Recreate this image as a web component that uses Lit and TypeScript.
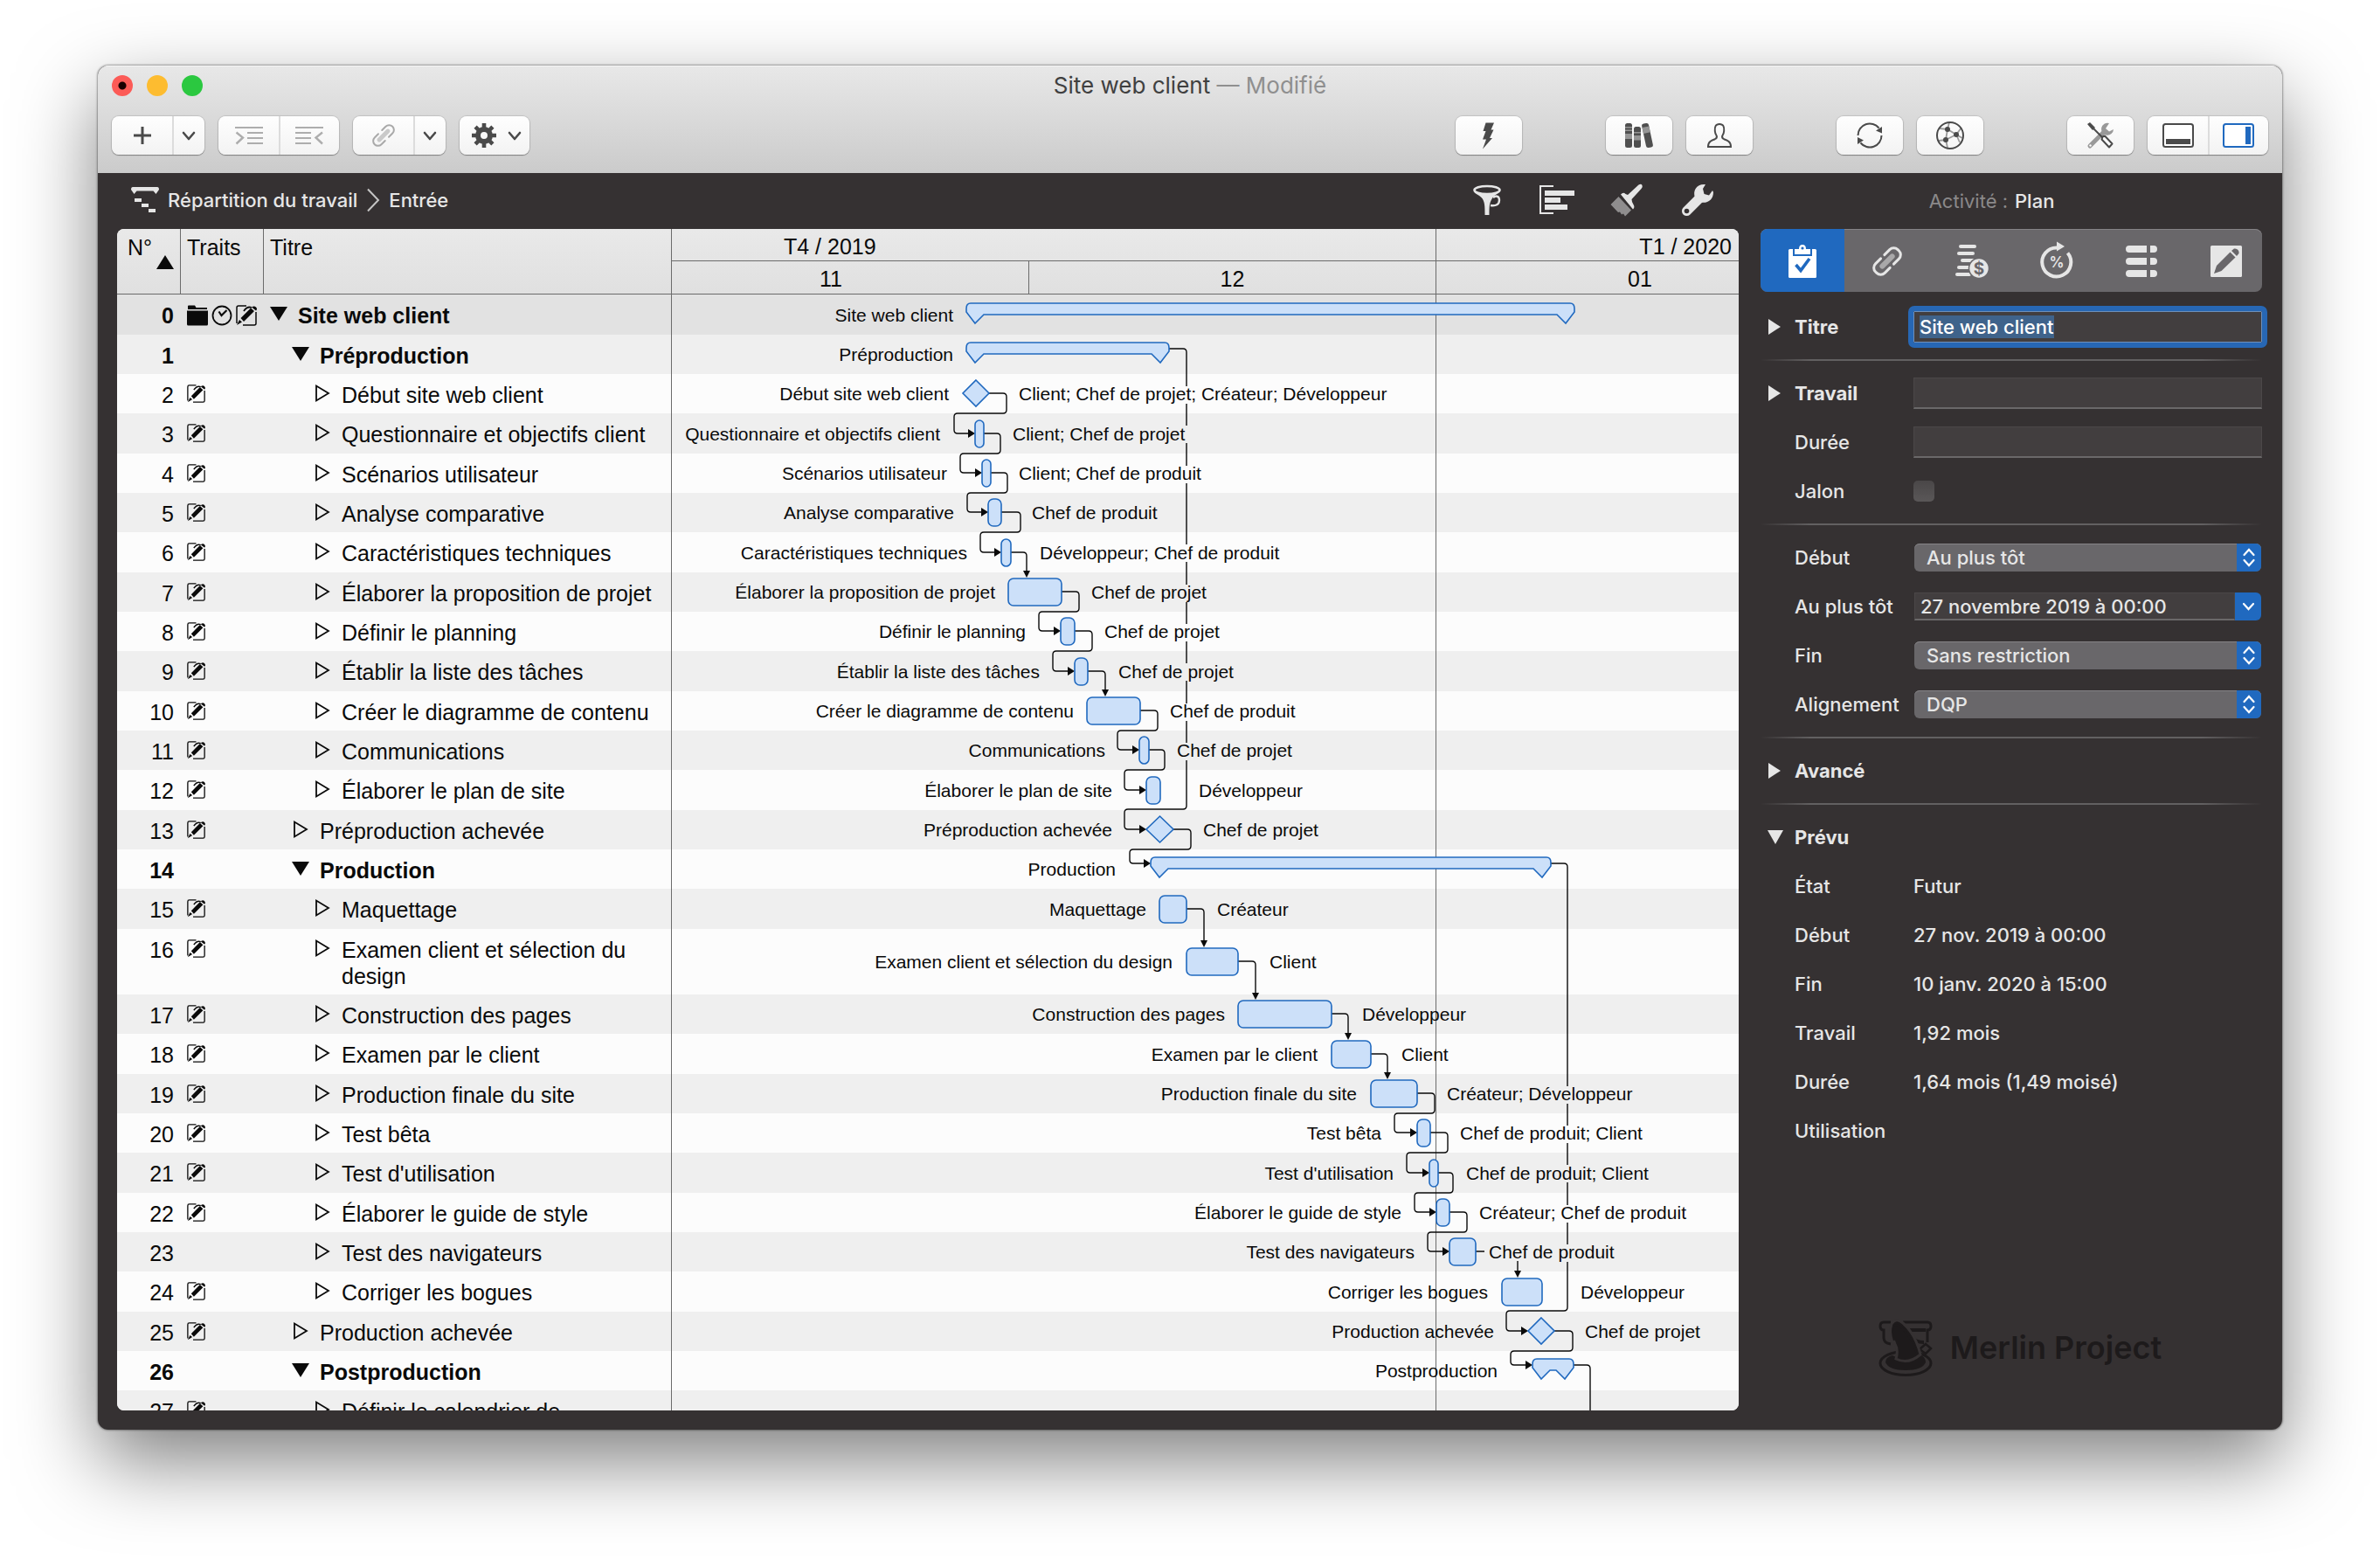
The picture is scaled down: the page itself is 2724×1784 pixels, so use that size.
import { LitElement, html, svg, css, nothing } from "lit";
import { customElement, query } from "lit/decorators.js";
import { classMap } from "lit/directives/class-map.js";
import { styleMap } from "lit/directives/style-map.js";

/* ---------- data ---------- */

type Kind = "group" | "bar" | "milestone";

interface Task {
  id: number;
  title: string;
  level: number;
  kind: Kind;
  /** Horizontal extent on the time scale, in chart units. */
  from: number;
  to: number;
  who?: string;
  note: boolean;
  lines?: number;
}

const task = (
  id: number,
  level: number,
  kind: Kind,
  title: string,
  from: number,
  to: number,
  who = "",
  note = true,
  lines = 1
): Task => ({ id, level, kind, title, from, to, who, note, lines });

const TASKS: Task[] = [
  task(0, 0, "group", "Site web client", 338, 1034),
  task(1, 1, "group", "Préproduction", 338, 570, "", false),
  task(2, 2, "milestone", "Début site web client", 334, 364, "Client; Chef de projet; Créateur; Développeur"),
  task(3, 2, "bar", "Questionnaire et objectifs client", 348, 358, "Client; Chef de projet"),
  task(4, 2, "bar", "Scénarios utilisateur", 356, 366, "Client; Chef de produit"),
  task(5, 2, "bar", "Analyse comparative", 363, 378, "Chef de produit"),
  task(6, 2, "bar", "Caractéristiques techniques", 378, 389, "Développeur; Chef de produit"),
  task(7, 2, "bar", "Élaborer la proposition de projet", 386, 447, "Chef de projet"),
  task(8, 2, "bar", "Définir le planning", 446, 462, "Chef de projet"),
  task(9, 2, "bar", "Établir la liste des tâches", 462, 477, "Chef de projet"),
  task(10, 2, "bar", "Créer le diagramme de contenu", 476, 537, "Chef de produit"),
  task(11, 2, "bar", "Communications", 536, 547, "Chef de projet"),
  task(12, 2, "bar", "Élaborer le plan de site", 544, 560, "Développeur"),
  task(13, 1, "milestone", "Préproduction achevée", 544, 575, "Chef de projet"),
  task(14, 1, "group", "Production", 549, 1007, "", false),
  task(15, 2, "bar", "Maquettage", 559, 590, "Créateur"),
  task(16, 2, "bar", "Examen client et sélection du design", 590, 649, "Client", true, 2),
  task(17, 2, "bar", "Construction des pages", 649, 756, "Développeur"),
  task(18, 2, "bar", "Examen par le client", 756, 801, "Client"),
  task(19, 2, "bar", "Production finale du site", 801, 854, "Créateur; Développeur"),
  task(20, 2, "bar", "Test bêta", 854, 869, "Chef de produit; Client"),
  task(21, 2, "bar", "Test d'utilisation", 868, 878, "Chef de produit; Client"),
  task(22, 2, "bar", "Élaborer le guide de style", 876, 891, "Créateur; Chef de produit"),
  task(23, 2, "bar", "Test des navigateurs", 891, 921, "Chef de produit", false),
  task(24, 2, "bar", "Corriger les bogues", 951, 997, "Développeur"),
  task(25, 1, "milestone", "Production achevée", 981, 1011, "Chef de projet"),
  task(26, 1, "group", "Postproduction", 986, 1033, "", false),
  task(27, 2, "bar", "Définir le calendrier de", 1100, 1110),
];

/** Where each row's left and right captions stand on the time scale. */
const CAPTIONS: Record<number, [number, number]> = {
  0: [323, 0], 1: [323, 0], 2: [318, 398], 3: [308, 391], 4: [316, 398],
  5: [324, 413], 6: [339, 422], 7: [371, 481], 8: [406, 496], 9: [422, 512],
  10: [461, 571], 11: [497, 579], 12: [505, 604], 13: [505, 609], 14: [509, 0],
  15: [544, 625], 16: [574, 685], 17: [634, 791], 18: [740, 836], 19: [785, 888],
  20: [813, 903], 21: [827, 910], 22: [836, 925], 23: [851, 936], 24: [935, 1041],
  25: [942, 1046], 26: [946, 0],
};

/** Links that turn back: source row, turning x, entry x. */
const BACK_LINKS: [number, number, number][] = [
  [2, 384, 324], [3, 377, 331], [4, 385, 339], [5, 400, 354], [7, 467, 421],
  [8, 482, 437], [10, 557, 511], [11, 565, 519], [13, 595, 525], [19, 874, 828],
  [20, 889, 842], [21, 895, 851], [22, 911, 866], [25, 1032, 961],
];

/** Links that drop straight onto the next bar: source row, x. */
const DROP_LINKS: [number, number][] = [
  [6, 407], [9, 497], [15, 610], [16, 669], [17, 775], [18, 820],
];

const rowHeight = (t: Task): number => (t.lines === 2 ? 75 : t.id % 3 === 0 ? 46 : 45);

const ROW_TOPS: number[] = [];
TASKS.reduce((y, t) => {
  ROW_TOPS.push(y);
  return y + rowHeight(t);
}, 0);

const centre = (id: number): number => {
  const h = rowHeight(TASKS[id]);
  return ROW_TOPS[id] + (h === 75 ? 37 : h - 23);
};
const linkY = (id: number): number => centre(id) - (TASKS[id].kind === "group" ? 6 : 0);

/* ---------- icons ---------- */

const ic = (body: unknown, size = 40) =>
  html`<svg width=${size} height=${size} viewBox="0 0 40 40" aria-hidden="true">${body}</svg>`;

const I = {
  plus: ic(svg`<path d="M20 10v20M10 20h20" stroke="#4a4a4a" stroke-width="3" fill="none"/>`),
  down: html`<svg width="18" height="18" viewBox="0 0 18 18" aria-hidden="true"><path d="M3 6l6 7 6-7" stroke="#4a4a4a" stroke-width="2.6" fill="none" stroke-linecap="round" stroke-linejoin="round"/></svg>`,
  indent: ic(svg`<g stroke="#adadad" stroke-width="2" fill="none"><path d="M4 11h32M18 17h18M18 23h18M18 29h18"/><path d="M5.5 16.500l7.500 6-7.500 7" stroke-width="2.4"/></g>`),
  outdent: ic(svg`<g stroke="#adadad" stroke-width="2" fill="none"><path d="M4 11h32M4 17h18M4 23h18M4 29h18"/><path d="M35 16.500l-7.500 6 7.500 7" stroke-width="2.4"/></g>`),
  link: ic(svg`<g transform="rotate(45 20 20)" fill="none" stroke-linecap="round"><path d="M20 13v14" stroke="#c9c9c9" stroke-width="5"/><path d="M14.500 17v-6a5.500 5.500 0 0 1 11 0v6M14.500 23v6a5.500 5.500 0 0 0 11 0v-6" stroke="#a9a9a9" stroke-width="2"/></g>`),
  gear: ic(svg`<g stroke="#4a4a4a" fill="none"><circle cx="20" cy="20" r="7" stroke-width="6"/><g stroke-width="4.6"><path d="M20 6v6M20 28v6M6 20h6M28 20h6M10.100 10.100l4.200 4.200M25.700 25.700l4.200 4.200M29.900 10.100l-4.200 4.200M14.300 25.700l-4.200 4.200"/></g></g>`),
  bolt: ic(svg`<path d="M16.500 5.500H26L22.500 13.500H25.500L21 23H24L13 35.500L17 24.500H13L16.500 15H13.500Z" fill="#4a4a4a"/>`),
  books: ic(svg`<g fill="#4f4f4f"><rect x="4" y="6" width="8" height="28" rx="2.500"/><rect x="14" y="10" width="8" height="24" rx="2.500"/><g transform="rotate(-12 29.500 20)"><rect x="25.500" y="6" width="8" height="28" rx="2.500"/><path d="M25.500 10h8v7h-8z" fill="#959595"/></g></g><path d="M4 10h8v1.500H4zM4 13.500h8V15H4zM4 18h8v6H4zM14 16h8v1.500h-8zM14 20h8v5.500h-8z" fill="#959595"/>`),
  person: ic(svg`<path d="M20 7c-4.500 0-5.600 3-5.200 8 .2 3 1 4 2 5.500.6 2.200-.3 3-2 3.700-4 1.500-8 3-7.800 8.800h26c.2-5.800-3.800-7.300-7.800-8.800-1.700-.7-2.600-1.500-2-3.700 1-1.500 1.800-2.500 2-5.500.4-5-.7-8-5.200-8z" fill="none" stroke="#4a4a4a" stroke-width="2"/>`),
  sync: ic(svg`<path d="M6.500 20a13.500 13.500 0 0 1 24-8.500M33.500 20a13.500 13.500 0 0 1-24 8.500" fill="none" stroke="#4a4a4a" stroke-width="2"/><path d="M34 10v7.500l-7-3zM6 30v-8l7 3.500z" fill="#4a4a4a"/>`),
  globe: ic(svg`<g fill="none" stroke="#9a9a9a" stroke-width="1.800"><path d="M17 13l10 6-12 6zM17 13L8 12M17 13l2-8M27 19l6-8M27 19l7 4M15 25l-8 1M15 25l2 9M27 19l4 9"/></g><circle cx="20" cy="20" r="15" fill="none" stroke="#4a4a4a" stroke-width="2"/><g fill="#4a4a4a"><circle cx="17" cy="13" r="3"/><circle cx="27" cy="19" r="3"/><circle cx="15" cy="25" r="3"/></g>`),
  tools: ic(svg`<path d="M8 32L24 16" stroke="#999" stroke-width="5" stroke-linecap="round"/><path d="M30 6a7 7 0 1 0 5 7l-5 2.500-4-3.500z" fill="#999"/><circle cx="8.500" cy="31.500" r="1.200" fill="#fff"/><path d="M8 8l16 16" stroke="#4a4a4a" stroke-width="2"/><path d="M5 7l3-2 6 6-3 3z" fill="#4a4a4a"/><path d="M22.500 21.500l2.500-1 8.500 9-3.500 4-8.500-9z" fill="#fff" stroke="#4a4a4a" stroke-width="2" stroke-linejoin="round"/>`),
  panelBottom: ic(svg`<rect x="3" y="7" width="34" height="26" rx="2.500" fill="#fff" stroke="#4a4a4a" stroke-width="2"/><path d="M6 24h28v6H6z" fill="#4a4a4a"/>`),
  panelRight: ic(svg`<rect x="3" y="7" width="34" height="26" rx="2.500" fill="#fff" stroke="#2069bf" stroke-width="2"/><path d="M28 10h6v20h-6z" fill="#2069bf"/>`),
  outline: html`<svg width="32" height="30" viewBox="0 0 32 30" aria-hidden="true"><path d="M2 0h28q2 0 2 3l-3.500 5-3-3.500h-19L3.500 8 0 3q0-3 2-3zM4 13h8v4H4zM12 19h8v4h-8zM20 25h8v4h-8z" fill="#e6e6e6"/></svg>`,
  chevron: html`<svg width="16" height="28" viewBox="0 0 16 28" aria-hidden="true"><path d="M2 1.500l12 12.500L2 26.500" stroke="#c4c4c4" stroke-width="2" fill="none"/></svg>`,
  funnel: ic(svg`<ellipse cx="20" cy="8.500" rx="14.500" ry="4.500" fill="none" stroke="#e6e6e6" stroke-width="2.600"/><path d="M4.500 10c2 3 6 4 9 7 4 4 4 10 4 20h5c0-10 0-14 4-20 2-3 6-4 8-7-8 4-22 4-30 0z" fill="#e6e6e6"/><path d="M27 17c4-3 7-1 7 3 0 5-4 7-10 6" fill="none" stroke="#e6e6e6" stroke-width="2.400"/>`),
  gantt: html`<svg width="40" height="36" viewBox="0 0 40 36" aria-hidden="true"><path d="M16 2H1v31h15" fill="none" stroke="#e6e6e6" stroke-width="2"/><path d="M6 7h34v6H6zM6 15h18v6H6zM6 23h26v6H6z" fill="#e6e6e6"/></svg>`,
  brush: ic(svg`<path d="M13 13.500q3-3 5.500-.5l2.500 1L33.500 2.500q3-1.500 4 .5t-1 4L25.500 19q0 3 2 6t-.5 5.500z" fill="#e6e6e6"/><path d="M10.500 16L25 31.500l-7 7-2-3-2 1-2-3-2 .5L1.500 25z" fill="#8f8d8e"/>`),
  wrench: ic(svg`<path d="M8.500 32.500L24 17" stroke="#e6e6e6" stroke-width="11" stroke-linecap="round"/><path d="M30 2c-10-1-15 7-12 15l5 5c8 3 16-2 16-11l-1-2-4 5.500-5.500-1.500-1.500-6z" fill="#e6e6e6"/><circle cx="8.500" cy="32.500" r="2.800" fill="#353132"/>`),
  clipboard: ic(svg`<rect x="4" y="6" width="32" height="33" rx="1.500" fill="#fff"/><path d="M10 5.500V13h20V5.500" fill="none" stroke="#2069bf" stroke-width="2"/><path d="M12 11V6h4q0-5 4-5t4 5h4v5z" fill="#fff"/><circle cx="20" cy="5" r="1.600" fill="#2069bf"/><path d="M12.500 24l5.500 6.500L28 17" fill="none" stroke="#2069bf" stroke-width="3.600"/>`),
  tabLink: ic(svg`<g transform="rotate(45 20 20)" fill="none" stroke-linecap="round"><path d="M20 12v16" stroke="#a9a8a9" stroke-width="6"/><path d="M12.500 17V8.500a6.500 6.500 0 0 1 6.500-6.500h2a6.500 6.500 0 0 1 6.500 6.500V17M12.500 23v8.500a6.500 6.500 0 0 0 6.500 6.500h2a6.500 6.500 0 0 0 6.500-6.500V23" stroke="#e6e6e6" stroke-width="3"/></g>`),
  tabCost: ic(svg`<g fill="#e6e6e6"><rect x="5" y="1" width="20" height="4" rx="2"/><rect x="3" y="9" width="20" height="4" rx="2"/><rect x="7" y="17" width="16" height="4" rx="2"/><rect x="3" y="25" width="16" height="4" rx="2"/><rect x="1" y="33" width="18" height="4" rx="2"/></g><circle cx="28" cy="28" r="11.500" fill="#e6e6e6" stroke="#69676a" stroke-width="1.500"/><text x="28" y="35" text-anchor="middle" font-family="Inter, sans-serif" font-weight="700" font-size="19" fill="#69676a">$</text>`),
  tabPercent: ic(svg`<path d="M20 4.500a16.500 16.500 0 1 0 12.500 6" fill="none" stroke="#e6e6e6" stroke-width="4"/><path d="M20-2.500v11l9-5.500z" fill="#e6e6e6"/><text x="20" y="27" text-anchor="middle" font-family="Inter, sans-serif" font-weight="600" font-size="17" fill="#e6e6e6">%</text>`),
  tabRows: ic(svg`<path d="M6 2h20v8H6a4 4 0 0 1 0-8zM30 2h4a4 4 0 0 1 0 8h-4zM6 16h20v8H6a4 4 0 0 1 0-8zM30 16h4a4 4 0 0 1 0 8h-4zM6 30h20v8H6a4 4 0 0 1 0-8zM30 30h4a4 4 0 0 1 0 8h-4z" fill="#e6e6e6"/>`),
  tabEdit: ic(svg`<rect x="2" y="2" width="36" height="36" rx="1.500" fill="#e6e6e6"/><path d="M6 34l3-9L24.500 9.500l6 6L14.500 31z" fill="#69676a"/><path d="M26 8l3-2.500q3-.5 4.500 1.500t1 4L32 14z" fill="#69676a"/>`),
  updown: html`<svg width="28" height="32" viewBox="0 0 28 32" aria-hidden="true"><path d="M8.500 13l5.500-6 5.500 6M8.500 19l5.500 6 5.500-6" stroke="#fff" stroke-width="2.200" fill="none" stroke-linecap="round"/></svg>`,
  dateDown: html`<svg width="30" height="32" viewBox="0 0 30 32" aria-hidden="true"><path d="M10 13l5.500 6L21 13" stroke="#fff" stroke-width="2.200" fill="none" stroke-linecap="round"/></svg>`,
  folder: html`<svg width="24" height="24" viewBox="0 0 24 24" aria-hidden="true"><path d="M1 1.500Q1 .5 2 .5h7l1.500 2.500H23V5H1zM0 6.500h24V22q0 1.500-1.500 1.500h-21Q0 23.500 0 22z" fill="#0a0a0a"/></svg>`,
  clock: html`<svg width="24" height="24" viewBox="0 0 24 24" aria-hidden="true"><circle cx="12" cy="12" r="10.500" fill="none" stroke="#0a0a0a" stroke-width="1.800"/><path d="M8.500 7.500l3 4.500 6-6" fill="none" stroke="#0a0a0a" stroke-width="2.200"/></svg>`,
  merlin: html`<svg width="62" height="66" viewBox="0 0 62 66" aria-hidden="true">
    <g fill="none" stroke="#1d1a1b" stroke-width="3">
      <path d="M28 4h28q4 0 4 4.500T56 13v14M14 4H6Q2 4 2 8.500T6 13v9q0 6 8 7"/>
      <path d="M34 13h20M38 19v2q4 6 14 6" stroke-width="4"/>
      <path d="M54 29l6 5-6 6-7-5z" stroke-width="2.500"/>
      <ellipse cx="31" cy="51" rx="29" ry="13.500"/>
    </g>
    <path d="M8 50q0-6 8-8 15 9 30-1 8 2 8 9-4 9-23 9T8 50z" fill="#1d1a1b"/>
    <path d="M20 46q3-10-1-17Q12 14 15 6q5-8 13-1 14 12 20 36-14 12-28 5z" fill="#1d1a1b" stroke="#353132" stroke-width="3"/>
    <path d="M18 25q-4-12 0-17 4-3 9 3 12 12 16 27" fill="none" stroke="#1d1a1b" stroke-width="2"/></svg>`,
};

const noteIcon = (size: number) => html`<svg width=${size} height=${size} viewBox="0 0 24 24" aria-hidden="true">
  <path d="M12 1H3Q1 1 1 3v18M23 8v13q0 2-2 2H8" fill="none" stroke="#0a0a0a" stroke-width="1.500"/>
  <path d="M9 7q4-6 9-4" fill="none" stroke="#0a0a0a" stroke-width="1.800"/>
  <path d="M1 23l3-6 3 2.500zM5.500 15L17 3.500l4 3.500L9 19zM18 2.500q3-2 5 0t0 4z" fill="#0a0a0a"/></svg>`;

/* ---------- Gantt chart ---------- */

@customElement("gantt-chart")
export class GanttChart extends LitElement {
  static styles = css`
    :host {
      display: flex;
      flex-direction: column;
      min-width: 0;
      overflow: hidden;
      font-family: "Liberation Sans", Arial, sans-serif;
      color: #0a0a0a;
    }
    .head {
      height: 75px;
      flex: none;
      box-sizing: border-box;
      border-bottom: 1px solid #6b6b6b;
      background: linear-gradient(#e9e9e9, #e0e0e0);
      font-size: 25px;
      overflow: hidden;
    }
    .scale {
      display: flex;
      height: 37px;
      box-sizing: border-box;
      line-height: 40px;
      border-left: 1px solid #6b6b6b;
    }
    .scale.quarters {
      border-bottom: 1px solid #6b6b6b;
    }
    .cell {
      box-sizing: border-box;
      flex: none;
      border-right: 1px solid #6b6b6b;
    }
    .q4 {
      width: 875px;
      padding-left: 128px;
    }
    .q1 {
      flex: 1;
      border-right: 0;
      text-align: right;
      padding-right: 8px;
    }
    .november {
      width: 453px;
      margin-left: -44px;
      text-align: center;
    }
    .december,
    .january {
      width: 466px;
      text-align: center;
    }
    .january {
      border-right: 0;
    }
    .canvas {
      display: block;
      flex: none;
      width: 100%;
    }
    .stripe {
      fill: #fcfcfc;
    }
    .stripe.odd {
      fill: #efefef;
    }
    .stripe.selected {
      fill: #e2e2e2;
    }
    .grid {
      stroke: #6b6b6b;
      stroke-width: 1;
    }
    .dep {
      fill: none;
      stroke: #0a0a0a;
      stroke-width: 1.4;
    }
    .arrow {
      fill: #0a0a0a;
    }
    .shape {
      fill: #cce0f9;
      stroke: #2069bf;
      stroke-width: 1.6;
    }
    .label {
      font-size: 21px;
      fill: #0a0a0a;
    }
    .end {
      text-anchor: end;
    }
  `;

  private shape(t: Task) {
    const c = centre(t.id);
    const { from: a, to: b } = t;
    if (t.kind === "milestone") {
      const m = (a + b) / 2;
      return svg`<path class="shape" d="M${m} ${c - 15}L${b} ${c}L${m} ${c + 15}L${a} ${c}Z"/>`;
    }
    if (t.kind === "group") {
      return svg`<path class="shape" d="M${a + 5} ${c - 13}H${b - 5}Q${b} ${c - 13} ${b} ${c - 7}V${c - 3}L${b - 10} ${c + 10}L${b - 20} ${c}H${a + 20}L${a + 10} ${c + 10}L${a} ${c - 3}V${c - 7}Q${a} ${c - 13} ${a + 5} ${c - 13}Z"/>`;
    }
    const w = b - a;
    return svg`<rect class="shape" x=${a} y=${c - 15} width=${w} height="31" rx=${Math.min(6, w / 2)}/>`;
  }

  /** Turns back below the source row, then enters the next row from the left. */
  private back(x1: number, y1: number, x2: number, mid: number, x3: number, y2: number, x4: number) {
    return svg`<path class="dep" d="M${x1} ${y1}H${x2 - 4}Q${x2} ${y1} ${x2} ${y1 + 4}V${mid - 4}Q${x2} ${mid} ${x2 - 4} ${mid}H${x3 + 4}Q${x3} ${mid} ${x3} ${mid + 4}V${y2 - 4}Q${x3} ${y2} ${x3 + 4} ${y2}H${x4 - 6}"/>
      <path class="arrow" d="M${x4} ${y2}l-8 -5v10z"/>`;
  }

  private drop(id: number, x: number) {
    const y1 = centre(id);
    const y2 = centre(id + 1) - 16;
    return svg`<path class="dep" d="M${TASKS[id].to} ${y1}H${x - 4}Q${x} ${y1} ${x} ${y1 + 4}V${y2 - 6}"/>
      <path class="arrow" d="M${x} ${y2}l-4 -8h8z"/>`;
  }

  /** A long summary link; it pauses behind the captions of the rows it crosses. */
  private long(id: number, x: number, target: number, entry: number, crossed: number[]) {
    const y1 = linkY(id);
    const mid = ROW_TOPS[target] - 1;
    const y2 = centre(target);
    const x4 = TASKS[target].from;
    const gaps = crossed.map((r) => `V${ROW_TOPS[r] + 14}M${x} ${ROW_TOPS[r] + 34}`).join("");
    return svg`<path class="dep" d="M${TASKS[id].to} ${y1}H${x - 4}Q${x} ${y1} ${x} ${y1 + 4}${gaps}V${mid - 4}Q${x} ${mid} ${x - 4} ${mid}H${entry + 4}Q${entry} ${mid} ${entry} ${mid + 4}V${y2 - 4}Q${entry} ${y2} ${entry + 4} ${y2}H${x4 - 6}"/>
      <path class="arrow" d="M${x4} ${y2}l-8 -5v10z"/>`;
  }

  render() {
    const total = ROW_TOPS[27] + rowHeight(TASKS[27]);
    return html`
      <div class="head">
        <div class="scale quarters">
          <div class="cell q4">T4 / 2019</div>
          <div class="cell q1">T1 / 2020</div>
        </div>
        <div class="scale">
          <div class="cell november">11</div>
          <div class="cell december">12</div>
          <div class="cell january">01</div>
        </div>
      </div>
      <svg class="canvas" height=${total}>
        ${TASKS.map(
          (t) => svg`<rect class=${"stripe" + (t.id === 0 ? " selected" : t.id % 2 ? " odd" : "")}
            x="0" y=${ROW_TOPS[t.id]} width="100%" height=${rowHeight(t)}/>`
        )}
        <path class="grid" d="M.5 0V${total}M875.5 0V${total}"/>
        ${BACK_LINKS.map(([id, out, entry]) =>
          this.back(TASKS[id].to, linkY(id), out, ROW_TOPS[id + 1], entry, linkY(id + 1), TASKS[id + 1].from)
        )}
        ${DROP_LINKS.map(([id, x]) => this.drop(id, x))}
        ${this.long(1, 590, 13, 519, [2, 3, 4, 6, 7, 8, 9, 10, 11])}
        ${this.long(14, 1026, 25, 956, [19, 20, 21, 22, 23])}
        <path class="dep" d="M921 ${centre(23)}H931M969 ${ROW_TOPS[24] - 12}V${centre(24) - 22}"/>
        <path class="arrow" d="M969 ${centre(24) - 16}l-4 -8h8z"/>
        <path class="dep" d="M1033 ${linkY(26)}H1048Q1052 ${linkY(26)} 1052 ${linkY(26) + 4}V${total}"/>
        ${TASKS.slice(0, 27).map((t) => this.shape(t))}
        ${TASKS.slice(0, 27).map((t) => {
          const [left, right] = CAPTIONS[t.id];
          const y = centre(t.id) + 8;
          return svg`<text class="label end" x=${left} y=${y}>${t.title}</text>
            ${t.who ? svg`<text class="label" x=${right} y=${y}>${t.who}</text>` : nothing}`;
        })}
      </svg>
    `;
  }
}

/* ---------- inspector ---------- */

@customElement("plan-inspector")
export class PlanInspector extends LitElement {
  static styles = css`
    :host {
      display: flex;
      flex-direction: column;
      box-sizing: border-box;
      padding: 0 23px 0 25px;
      color: #e6e6e6;
      font: 500 22px/28px Inter, "Liberation Sans", sans-serif;
    }
    svg {
      display: block;
      overflow: visible;
    }
    button,
    input,
    select {
      font: inherit;
      color: inherit;
      margin: 0;
      border: 0;
      padding: 0;
      background: none;
      border-radius: 0;
      appearance: none;
      min-width: 0;
    }
    .heading {
      display: grid;
      grid-template-columns: 1fr 1fr;
      gap: 8px;
      height: 64px;
      align-items: center;
      flex: none;
    }
    .kind {
      color: #8b898a;
      text-align: right;
      font-weight: 400;
    }
    .tabs {
      display: flex;
      height: 72px;
      flex: none;
      border-radius: 8px;
      overflow: hidden;
      background: #69676a;
      box-shadow: inset 0 1px 0 #858386;
      margin-bottom: 12px;
    }
    .tab {
      flex: none;
      width: 97px;
      display: flex;
      align-items: center;
      justify-content: center;
      padding-top: 2px;
    }
    .tab.active {
      background: #2069bf;
      width: 96px;
    }
    hr {
      flex: none;
      width: 100%;
      height: 2px;
      margin: 9px 0;
      border: 0;
      background: linear-gradient(90deg, transparent, #626061 10%, #626061 88%, transparent);
    }
    .row {
      display: grid;
      grid-template-columns: 39px 136px 1fr;
      align-items: center;
      height: 56px;
    }
    .twisty {
      display: flex;
      padding-left: 8px;
      justify-self: start;
    }
    .strong {
      font-weight: 700;
    }
    .label {
      grid-column: 2;
      white-space: nowrap;
    }
    .value {
      grid-column: 3;
      white-space: nowrap;
    }
    .field {
      height: 36px;
      box-sizing: border-box;
      background: #423e3f;
      border: 1px solid #4b4748;
      border-bottom: 2px solid #6a6869;
      width: 100%;
      padding: 0 6px;
    }
    .field:focus {
      outline: 6px solid #2767b4;
      outline-offset: 0;
      border: 1px solid #6f8fb8;
      border-radius: 1px;
    }
    .field::selection {
      background: #3f638b;
      color: #fff;
    }
    .tick {
      width: 24px;
      height: 24px;
      border-radius: 5px;
      background: linear-gradient(#4a4748, #5a5758);
    }
    .picker {
      display: grid;
      grid-template-columns: 1fr 28px;
      height: 32px;
      margin: 0 1px;
      border-radius: 6px;
      overflow: hidden;
      background: #69676a;
      box-shadow: inset 0 1px 0 #858386;
    }
    .picker select {
      grid-area: 1 / 1 / 2 / 3;
      padding-left: 14px;
      width: 100%;
    }
    .cap {
      grid-area: 1 / 2;
      background: #2069bf;
      pointer-events: none;
    }
    .date {
      display: grid;
      grid-template-columns: 1fr 30px;
      height: 32px;
      margin: 0 1px;
    }
    .date .field {
      height: 32px;
    }
    .date button {
      background: #2069bf;
      border-radius: 0 6px 6px 0;
    }
    .brand {
      margin-top: auto;
      padding: 0 0 61px 20px;
      display: flex;
      justify-content: center;
      align-items: center;
      gap: 20px;
      color: #1d1a1b;
      font-size: 36px;
      line-height: 40px;
      font-weight: 600;
    }
  `;

  @query("#titre") private titre!: HTMLInputElement;

  firstUpdated() {
    this.titre.focus();
    this.titre.select();
  }

  private twisty(label: string, open = false) {
    return html`<button class="twisty" aria-label=${label} aria-expanded=${open}>
      <svg width="18" height="18" viewBox="0 0 18 18">
        <path d=${open ? "M0 1h18L9 17z" : "M1 0v18l14-9z"} fill="#e6e6e6" />
      </svg>
    </button>`;
  }

  private choice(id: string, label: string, value: string) {
    return html`<div class="row">
      <label class="label" for=${id}>${label}</label>
      <div class="value picker">
        <select id=${id}><option>${value}</option></select>
        <span class="cap">${I.updown}</span>
      </div>
    </div>`;
  }

  render() {
    const tabs: [string, unknown][] = [
      ["Plan", I.clipboard],
      ["Liens", I.tabLink],
      ["Coûts", I.tabCost],
      ["Avancement", I.tabPercent],
      ["Champs", I.tabRows],
      ["Notes", I.tabEdit],
    ];
    const facts = [
      ["État", "Futur"],
      ["Début", "27 nov. 2019 à 00:00"],
      ["Fin", "10 janv. 2020 à 15:00"],
      ["Travail", "1,92 mois"],
      ["Durée", "1,64 mois (1,49 moisé)"],
      ["Utilisation", ""],
    ];
    return html`
      <div class="heading"><span class="kind">Activité :</span><span>Plan</span></div>
      <div class="tabs">
        ${tabs.map(
          ([name, icon], i) =>
            html`<button class=${classMap({ tab: true, active: i === 0 })} aria-label=${name}>${icon}</button>`
        )}
      </div>
      <div class="row">
        ${this.twisty("Détails du titre")}
        <label class="label strong" for="titre">Titre</label>
        <input class="value field" id="titre" type="text" .value=${"Site web client"} />
      </div>
      <hr />
      <div class="row">
        ${this.twisty("Détails du travail")}
        <label class="label strong" for="travail">Travail</label>
        <input class="value field" id="travail" type="text" />
      </div>
      <div class="row">
        <label class="label" for="duree">Durée</label>
        <input class="value field" id="duree" type="text" />
      </div>
      <div class="row">
        <label class="label" for="jalon">Jalon</label>
        <input class="value tick" id="jalon" type="checkbox" />
      </div>
      <hr />
      ${this.choice("debut", "Début", "Au plus tôt")}
      <div class="row">
        <label class="label" for="date">Au plus tôt</label>
        <div class="value date">
          <input class="field" id="date" type="text" .value=${"27 novembre 2019 à 00:00"} />
          <button aria-label="Choisir une date">${I.dateDown}</button>
        </div>
      </div>
      ${this.choice("fin", "Fin", "Sans restriction")} ${this.choice("alignement", "Alignement", "DQP")}
      <hr />
      <div class="row">${this.twisty("Avancé")}<span class="label strong">Avancé</span></div>
      <hr />
      <div class="row">${this.twisty("Prévu", true)}<span class="label strong">Prévu</span></div>
      ${facts.map(
        ([k, v]) => html`<div class="row"><span class="label">${k}</span><span class="value">${v}</span></div>`
      )}
      <div class="brand">${I.merlin}<span>Merlin Project</span></div>
    `;
  }
}

/* ---------- application window ---------- */

@customElement("app-root")
export class AppRoot extends LitElement {
  static styles = css`
    :host {
      display: flex;
      box-sizing: border-box;
      height: 100vh;
      padding: 75px 112px 148px;
      background: #fff;
      overflow: hidden;
      font: 500 22px/28px Inter, "Liberation Sans", sans-serif;
    }
    svg {
      display: block;
      overflow: visible;
    }
    button {
      font: inherit;
      color: inherit;
      margin: 0;
      border: 0;
      padding: 0;
      background: none;
      display: flex;
      align-items: center;
      justify-content: center;
    }
    .window {
      flex: 1;
      min-width: 0;
      display: flex;
      flex-direction: column;
      border-radius: 12px;
      overflow: hidden;
      background: #353132;
      box-shadow: 0 0 2px 1px rgba(0, 0, 0, 0.35), 0 36px 90px rgba(0, 0, 0, 0.5);
    }
    .chrome {
      flex: none;
      height: 123px;
      box-sizing: border-box;
      padding: 0 16px;
      background: linear-gradient(#e8e8e8, #cbcbcb);
      box-shadow: inset 0 1px 0 #f6f6f6;
    }
    .titlebar {
      display: grid;
      grid-template-columns: 1fr auto 1fr;
      align-items: center;
      height: 46px;
      margin-bottom: 12px;
      font-size: 26px;
      font-weight: 400;
      color: #404040;
    }
    .lights {
      display: flex;
      gap: 16px;
    }
    .light {
      width: 24px;
      height: 24px;
      border-radius: 50%;
    }
    .close {
      background: radial-gradient(circle, #1b0000 0 4px, #fc5b57 5px);
    }
    .minimise {
      background: #fdbc30;
    }
    .zoom {
      background: #2bc840;
    }
    .muted {
      color: #8f8f8f;
    }
    .tools {
      display: flex;
      gap: 16px;
    }
    .group {
      display: flex;
      height: 44px;
      border-radius: 8px;
      overflow: hidden;
      background: linear-gradient(#fefefe, #f3f3f3);
      box-shadow: 0 0 1px 1px rgba(0, 0, 0, 0.12), 0 1px 1px rgba(0, 0, 0, 0.3);
    }
    .group > button + button {
      box-shadow: inset 2px 0 0 #dcdcdc;
    }
    .action {
      width: 69px;
    }
    .more {
      width: 37px;
    }
    .single {
      width: 76px;
    }
    .menu {
      width: 80px;
      gap: 6px;
    }
    .spring {
      flex: 1;
    }
    .far {
      margin-left: 80px;
    }
    .body {
      flex: 1;
      min-height: 0;
      display: grid;
      grid-template-columns: minmax(0, 1fr) 622px;
    }
    .main {
      display: flex;
      flex-direction: column;
      min-height: 0;
      padding: 0 0 22px 22px;
    }
    .pathbar {
      flex: none;
      height: 62px;
      padding-bottom: 2px;
      display: flex;
      align-items: center;
      gap: 10px;
      padding-left: 16px;
      padding-right: 28px;
      color: #e6e6e6;
    }
    .pathbar a {
      color: inherit;
      text-decoration: none;
    }
    .views {
      margin-left: auto;
      display: flex;
      gap: 40px;
    }
    .plan {
      flex: 1;
      min-height: 0;
      display: grid;
      grid-template-columns: 634px minmax(0, 1fr);
      border-radius: 8px;
      overflow: hidden;
      background: #fcfcfc;
    }
    .outline {
      min-height: 0;
      overflow: hidden;
      color: #0a0a0a;
      font-family: "Liberation Sans", Arial, sans-serif;
    }
    .outline table {
      width: 100%;
      table-layout: fixed;
      border-collapse: separate;
      border-spacing: 0;
      font-size: 25px;
      line-height: 30px;
    }
    .outline th {
      height: 75px;
      box-sizing: border-box;
      padding: 7px;
      text-align: left;
      vertical-align: top;
      font-weight: 400;
      font-size: 25px;
      line-height: 28px;
      background: linear-gradient(#e9e9e9, #e0e0e0);
      border-bottom: 1px solid #6b6b6b;
      border-right: 1px solid #6b6b6b;
    }
    .outline th:last-child {
      border-right: 0;
    }
    .outline th.number {
      padding: 7px 7px 0 12px;
    }
    .sort {
      margin: -5px 0 0 auto;
    }
    .c-number {
      width: 73px;
    }
    .c-traits {
      width: 95px;
    }
    .outline td {
      box-sizing: border-box;
      height: 45px;
      padding: 9px 8px 6px 0;
      vertical-align: top;
    }
    .third td {
      height: 46px;
    }
    .even td {
      background: #fcfcfc;
    }
    .odd td {
      background: #efefef;
    }
    .selected td {
      background: #e2e2e2;
    }
    .bold td {
      font-weight: 700;
    }
    td.id {
      text-align: right;
    }
    .traits {
      display: flex;
      gap: 4px;
      padding: 3px 0 0 7px;
    }
    .name {
      display: flex;
      gap: 12px;
    }
    .name button {
      flex: none;
      width: 20px;
      height: 26px;
    }
  `;

  private row(t: Task) {
    const group = t.kind === "group";
    const first = t.id === 0;
    return html`<tr
      class=${classMap({ third: t.id % 3 === 0, selected: first, even: t.id % 2 === 0 && !first, odd: t.id % 2 === 1, bold: group })}
    >
      <td class="id">${t.id}</td>
      <td>
        <div class="traits">
          ${first ? html`${I.folder}${I.clock}` : nothing} ${t.note ? noteIcon(first ? 24 : 21) : nothing}
        </div>
      </td>
      <td>
        <div class="name" style=${styleMap({ paddingLeft: `${7 + t.level * 25}px` })}>
          <button aria-label=${t.title} aria-expanded=${group}>
            ${group
              ? html`<svg width="20" height="16" viewBox="0 0 20 16"><path d="M0 0h20L10 16z" fill="#0a0a0a" /></svg>`
              : html`<svg width="18" height="20" viewBox="0 0 18 20"><path d="M2 1.500v17L16 10z" fill="none" stroke="#0a0a0a" stroke-width="1.800" /></svg>`}
          </button>
          <span>${t.title}</span>
        </div>
      </td>
    </tr>`;
  }

  private single(label: string, icon: unknown, far = false) {
    return html`<div class=${classMap({ group: true, far })}>
      <button class="single" aria-label=${label}>${icon}</button>
    </div>`;
  }

  render() {
    return html`
      <div class="window">
        <div class="chrome">
          <div class="titlebar">
            <div class="lights">
              <button class="light close" aria-label="Fermer"></button>
              <button class="light minimise" aria-label="Réduire"></button>
              <button class="light zoom" aria-label="Agrandir"></button>
            </div>
            <div>Site web client <span class="muted">— Modifié</span></div>
          </div>
          <div class="tools">
            <div class="group">
              <button class="action" aria-label="Ajouter">${I.plus}</button>
              <button class="more" aria-label="Options d'ajout">${I.down}</button>
            </div>
            <div class="group">
              <button class="action" aria-label="Abaisser">${I.indent}</button>
              <button class="action" aria-label="Hausser">${I.outdent}</button>
            </div>
            <div class="group">
              <button class="action" aria-label="Lier">${I.link}</button>
              <button class="more" aria-label="Options de lien">${I.down}</button>
            </div>
            <div class="group"><button class="menu" aria-label="Actions">${I.gear}${I.down}</button></div>
            <div class="spring"></div>
            ${this.single("Automatiser", I.bolt)} ${this.single("Bibliothèque", I.books, true)}
            ${this.single("Ressources", I.person)} ${this.single("Synchroniser", I.sync, true)}
            ${this.single("Partager", I.globe)} ${this.single("Réglages", I.tools, true)}
            <div class="group">
              <button class="action" aria-label="Panneau inférieur">${I.panelBottom}</button>
              <button class="action" aria-label="Inspecteur">${I.panelRight}</button>
            </div>
          </div>
        </div>
        <div class="body">
          <div class="main">
            <div class="pathbar">
              ${I.outline}<a href="#repartition">Répartition du travail</a>${I.chevron}<a href="#entree">Entrée</a>
              <div class="views">
                <button aria-label="Filtrer">${I.funnel}</button>
                <button aria-label="Grouper">${I.gantt}</button>
                <button aria-label="Styles">${I.brush}</button>
                <button aria-label="Options de vue">${I.wrench}</button>
              </div>
            </div>
            <div class="plan">
              <div class="outline">
                <table>
                  <colgroup>
                    <col class="c-number" />
                    <col class="c-traits" />
                    <col />
                  </colgroup>
                  <thead>
                    <tr>
                      <th class="number">
                        N°
                        <svg class="sort" width="20" height="16" viewBox="0 0 20 16" aria-hidden="true">
                          <path d="M0 16h20L10 0z" fill="#0a0a0a" />
                        </svg>
                      </th>
                      <th>Traits</th>
                      <th>Titre</th>
                    </tr>
                  </thead>
                  <tbody>
                    ${TASKS.map((t) => this.row(t))}
                  </tbody>
                </table>
              </div>
              <gantt-chart></gantt-chart>
            </div>
          </div>
          <plan-inspector></plan-inspector>
        </div>
      </div>
    `;
  }
}
